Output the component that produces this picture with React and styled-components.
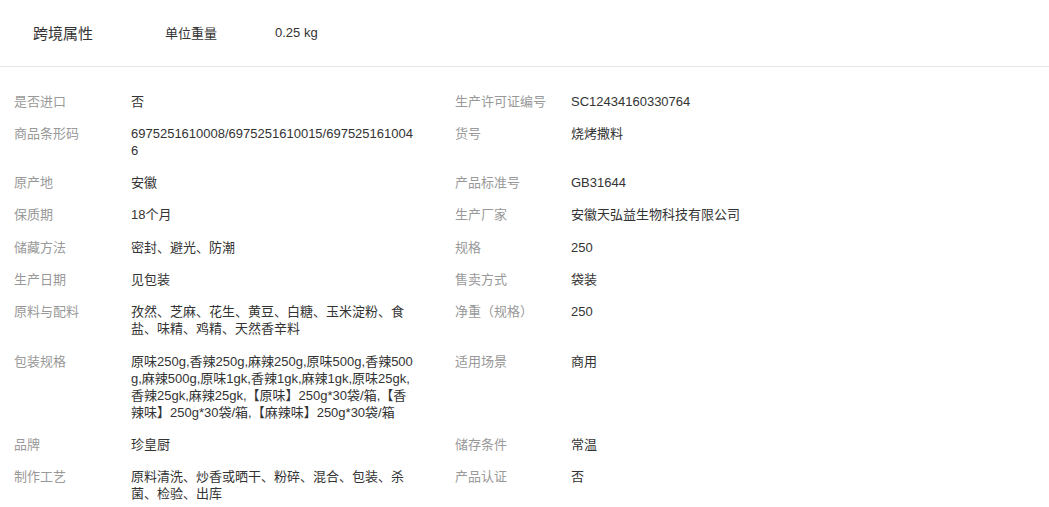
import styled, { createGlobalStyle } from "styled-components";

const GlobalStyle = createGlobalStyle`
  body {
    margin: 0;
    background: #fff;
    font-family: "Liberation Sans", Arial, "Noto Sans CJK SC", sans-serif;
  }
`;

const ATTRS = [
  ["是否进口", "否", "生产许可证编号", "SC12434160330764"],
  ["商品条形码", "6975251610008/6975251610015/6975251610046", "货号", "烧烤撒料"],
  ["原产地", "安徽", "产品标准号", "GB31644"],
  ["保质期", "18个月", "生产厂家", "安徽天弘益生物科技有限公司"],
  ["储藏方法", "密封、避光、防潮", "规格", "250"],
  ["生产日期", "见包装", "售卖方式", "袋装"],
  ["原料与配料", "孜然、芝麻、花生、黄豆、白糖、玉米淀粉、食盐、味精、鸡精、天然香辛料", "净重（规格）", "250"],
  [
    "包装规格",
    "原味250g,香辣250g,麻辣250g,原味500g,香辣500g,麻辣500g,原味1gk,香辣1gk,麻辣1gk,原味25gk,香辣25gk,麻辣25gk,【原味】250g*30袋/箱,【香辣味】250g*30袋/箱,【麻辣味】250g*30袋/箱",
    "适用场景",
    "商用",
  ],
  ["品牌", "珍皇厨", "储存条件", "常温"],
  ["制作工艺", "原料清洗、炒香或晒干、粉碎、混合、包装、杀菌、检验、出库", "产品认证", "否"],
];

const Page = styled.div`
  width: 1049px;
  color: #333;
`;

const TopBar = styled.div`
  height: 66px;
  display: flex;
  align-items: center;
  padding-left: 33px;
  border-bottom: 1px solid #e5e5e5;
  box-sizing: border-box;
  height: 67px;
  padding-bottom: 2px;
`;

const TopTitle = styled.div`
  width: 132px;
  font-size: 15px;
  color: #333;
`;

const TopLabel = styled.div`
  width: 110px;
  font-size: 13px;
  color: #333;
`;

const TopValue = styled.div`
  font-size: 13px;
  color: #333;
`;

const Grid = styled.div`
  display: grid;
  grid-template-columns: 117px 288px 36px 116px 1fr;
  row-gap: 15.3px;
  padding: 25.5px 0 0 14px;
  font-size: 13px;
  line-height: 17px;
`;

const Label = styled.div`
  color: #999;
  grid-column: ${(p) => p.$col};
`;

const Value = styled.div`
  color: #333;
  grid-column: ${(p) => p.$col};
  word-break: break-all;
`;

export default function App() {
  return (
    <Page>
      <GlobalStyle />
      <TopBar>
        <TopTitle>跨境属性</TopTitle>
        <TopLabel>单位重量</TopLabel>
        <TopValue>0.25 kg</TopValue>
      </TopBar>
      <Grid>
        {ATTRS.map(([l1, v1, l2, v2]) => [
          <Label key={l1} $col={1}>{l1}</Label>,
          <Value key={l1 + "v"} $col={2}>{v1}</Value>,
          <Label key={l2} $col={4}>{l2}</Label>,
          <Value key={l2 + "v"} $col={5}>{v2}</Value>,
        ])}
      </Grid>
    </Page>
  );
}
